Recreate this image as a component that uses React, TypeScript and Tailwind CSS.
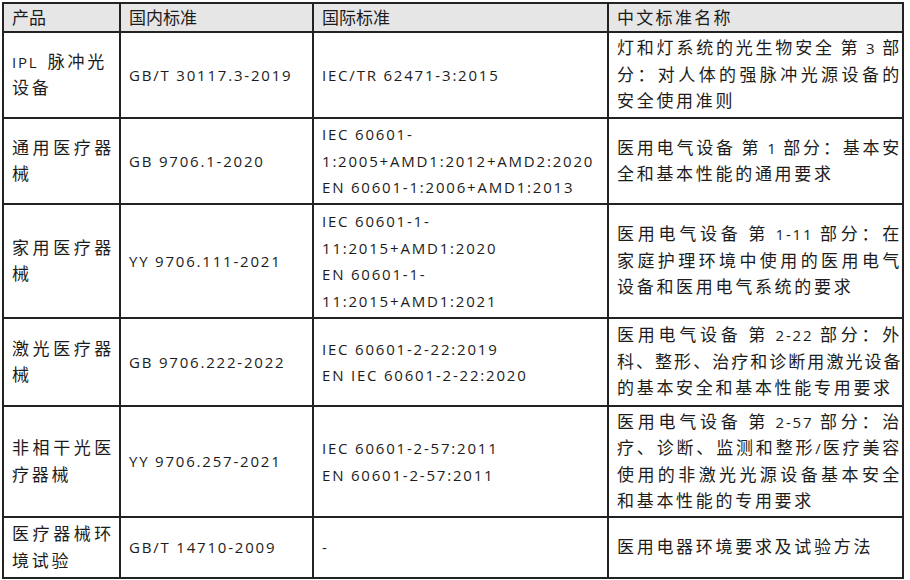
import React from "react";

type Line = { t: string; j?: boolean; tight?: boolean };

type Row = {
  product: Line[];
  national: string;
  intl: string[];
  name: Line[];
};

const CJK = /([\u2E80-\u9FFF\u3000-\u303F\uFF00-\uFFEF]+)/;

const rows: Row[] = [
  {
    product: [{ t: "IPL\u2002脉冲光" }, { t: "设备" }],
    national: "GB/T 30117.3-2019",
    intl: ["IEC/TR 62471-3:2015"],
    name: [
      { t: "灯和灯系统的光生物安全 第 3 部", j: true },
      { t: "分：对人体的强脉冲光源设备的", j: true },
      { t: "安全使用准则" },
    ],
  },
  {
    product: [{ t: "通用医疗器", j: true }, { t: "械" }],
    national: "GB 9706.1-2020",
    intl: ["IEC 60601-", "1:2005+AMD1:2012+AMD2:2020", "EN 60601-1:2006+AMD1:2013"],
    name: [
      { t: "医用电气设备 第 1 部分：基本安", j: true },
      { t: "全和基本性能的通用要求" },
    ],
  },
  {
    product: [{ t: "家用医疗器", j: true }, { t: "械" }],
    national: "YY 9706.111-2021",
    intl: ["IEC 60601-1-", "11:2015+AMD1:2020", "EN 60601-1-", "11:2015+AMD1:2021"],
    name: [
      { t: "医用电气设备 第 1-11 部分：在", j: true },
      { t: "家庭护理环境中使用的医用电气", j: true },
      { t: "设备和医用电气系统的要求" },
    ],
  },
  {
    product: [{ t: "激光医疗器", j: true }, { t: "械" }],
    national: "GB 9706.222-2022",
    intl: ["IEC 60601-2-22:2019", "EN IEC 60601-2-22:2020"],
    name: [
      { t: "医用电气设备 第 2-22 部分：外", j: true },
      { t: "科、整形、治疗和诊断用激光设备", j: true, tight: true },
      { t: "的基本安全和基本性能专用要求" },
    ],
  },
  {
    product: [{ t: "非相干光医", j: true }, { t: "疗器械" }],
    national: "YY 9706.257-2021",
    intl: ["IEC 60601-2-57:2011", "EN 60601-2-57:2011"],
    name: [
      { t: "医用电气设备 第 2-57 部分：治", j: true },
      { t: "疗、诊断、监测和整形/医疗美容", j: true },
      { t: "使用的非激光光源设备基本安全", j: true },
      { t: "和基本性能的专用要求" },
    ],
  },
  {
    product: [{ t: "医疗器械环", j: true }, { t: "境试验" }],
    national: "GB/T 14710-2009",
    intl: ["-"],
    name: [{ t: "医用电器环境要求及试验方法" }],
  },
];

const Runs = ({ text, cjk }: { text: string; cjk: string }) => (
  <>
    {text
      .split(CJK)
      .filter(Boolean)
      .map((part, i) =>
        CJK.test(part) ? (
          <span key={i} className={"text-[17px] " + cjk}>
            {part}
          </span>
        ) : (
          <span key={i} className="tracking-[1.8px]">
            {part}
          </span>
        )
      )}
  </>
);

const TextLine = ({ line }: { line: Line }) => (
  <div
    className={
      line.j
        ? "whitespace-nowrap text-justify [text-align-last:justify]"
        : "whitespace-nowrap"
    }
  >
    <Runs text={line.t} cjk={line.tight ? "tracking-[1.5px]" : "tracking-[2.7px]"} />
  </div>
);

const Head = ({ text, wide }: { text: string; wide?: boolean }) => (
  <div className="bg-[#e7e6e6] flex items-center pl-2 leading-[26px]">
    <Runs text={text} cjk={wide ? "tracking-[2.3px]" : "tracking-[0px]"} />
  </div>
);

const Cell = ({ children, className = "" }: { children: React.ReactNode; className?: string }) => (
  <div className={"bg-white flex flex-col justify-center pl-2 leading-[26.5px] " + className}>
    {children}
  </div>
);

export default function App() {
  return (
    <div
      className="w-[910px] h-[580px] bg-white pl-[2px] pt-[2px] text-[15px] text-[#1c1c1c]"
      style={{ fontFamily: '"Open Sans", "Noto Sans CJK SC", sans-serif' }}
    >
      <div className="inline-grid grid-cols-[115px_191px_293px_293px] grid-rows-[27px_84px_84px_112px_86px_109px_59px] gap-[2px] border-2 border-[#222] bg-[#222]">
        <Head text="产品" />
        <Head text="国内标准" />
        <Head text="国际标准" />
        <Head text="中文标准名称" wide />
        {rows.map((r, i) => (
          <React.Fragment key={i}>
            <Cell className="pr-[5px]">
              {r.product.map((l, k) => (
                <TextLine key={k} line={l} />
              ))}
            </Cell>
            <Cell>
              <TextLine line={{ t: r.national }} />
            </Cell>
            <Cell>
              {r.intl.map((t, k) => (
                <TextLine key={k} line={{ t }} />
              ))}
            </Cell>
            <Cell>
              {r.name.map((l, k) => (
                <TextLine key={k} line={l} />
              ))}
            </Cell>
          </React.Fragment>
        ))}
      </div>
    </div>
  );
}
